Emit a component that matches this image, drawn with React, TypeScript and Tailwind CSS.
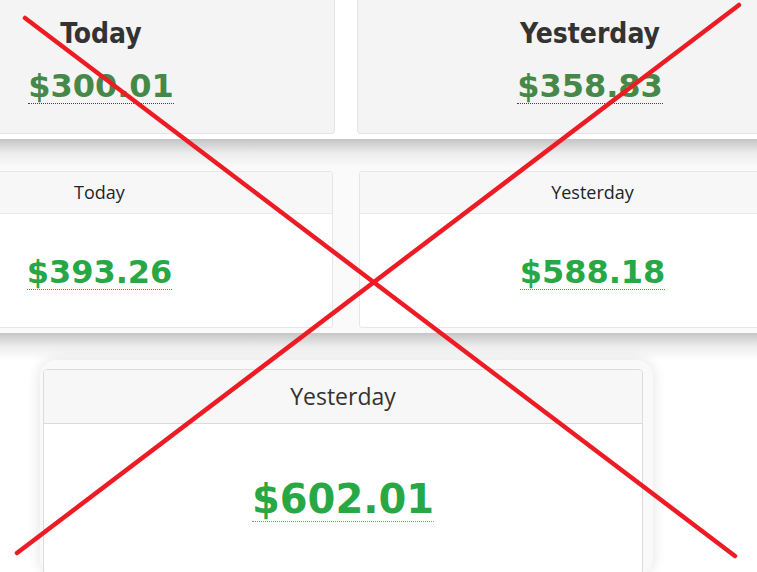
import React from "react";

const verdana = { fontFamily: '"DejaVu Sans", Verdana, sans-serif' };
const openSans = { fontFamily: '"Open Sans", "Noto Sans", sans-serif' };

function OldPanel({ label, amount, width }: { label: string; amount: string; width: string }) {
  return (
    <div className={`${width} h-[134px] shrink-0 bg-[#f4f4f4] border-x border-b border-[#e4e4e4] rounded-b-[4px] pt-[18px] text-center`}>
      <div className="text-[28px] leading-[32px] font-bold text-[#333]" style={{ fontFamily: '"DejaVu Sans Condensed", "DejaVu Sans", sans-serif' }}>
        {label}
      </div>
      <div className="mt-[19px]">
        <span className="inline-block text-[32px] leading-[34px] font-bold text-[#468847] border-b border-dotted border-[#444]" style={verdana}>
          {amount}
        </span>
      </div>
    </div>
  );
}

function CardPanel({ label, amount }: { label: string; amount: string }) {
  return (
    <div className="w-[467px] shrink-0 border border-[#e6e6e6] rounded-[3px] bg-white overflow-hidden">
      <div className="h-[42px] bg-[#f7f7f7] border-b border-[#ebebeb] flex items-center justify-center text-[18px] text-[#212529]" style={openSans}>
        {label}
      </div>
      <div className="h-[113px] pt-[41px] text-center">
        <span className="inline-block text-[32px] leading-[34px] font-bold text-[#28a745] border-b border-dotted border-[#28a745]" style={verdana}>
          {amount}
        </span>
      </div>
    </div>
  );
}

export default function App() {
  return (
    <div className="relative w-[757px] h-[572px] overflow-hidden bg-white">
      {/* first strip */}
      <div className="h-[139px] bg-white">
        <div className="flex gap-[22px] ml-[-133px]">
          <OldPanel label="Today" amount="$300.01" width="w-[468px]" />
          <OldPanel label="Yesterday" amount="$358.83" width="w-[466px]" />
        </div>
      </div>

      {/* second strip */}
      <div className="bg-[#fafafa]">
        <div className="h-[28px] bg-gradient-to-b from-[#c4c4c4] via-[#ececec] to-[#fafafa]" />
        <div className="flex gap-[26px] ml-[-134px] pt-[4px] pb-[5px]">
          <CardPanel label="Today" amount="$393.26" />
          <CardPanel label="Yesterday" amount="$588.18" />
        </div>
      </div>

      {/* third strip */}
      <div className="h-[27px] bg-gradient-to-b from-[#c6c6c6] via-[#ededed] to-white" />
      <div className="pl-[40px]">
        <div className="w-[613px] rounded-[16px] bg-[#f9f9f9] shadow-[0_0_14px_rgba(0,0,0,0.12)] pt-[9px] pl-[3px] pr-[10px]">
          <div className="border border-[#dcdcdc] rounded-[4px] bg-white overflow-hidden">
            <div className="h-[54px] bg-[#f7f7f7] border-b border-[#dadada] flex items-center justify-center text-[23px] text-[#333]" style={openSans}>
              Yesterday
            </div>
            <div className="h-[150px] pt-[53px] text-center">
              <span className="inline-block text-[40px] leading-[44px] font-bold text-[#28a745] border-b border-dotted border-[#5cb85c]" style={verdana}>
                $602.01
              </span>
            </div>
          </div>
        </div>
      </div>

      {/* red cross */}
      <svg className="absolute inset-0 pointer-events-none" width="757" height="572" viewBox="0 0 757 572">
        <line x1="25" y1="18" x2="735" y2="556" stroke="#ed1c24" strokeWidth="4.5" strokeLinecap="round" />
        <line x1="739" y1="5" x2="17" y2="553" stroke="#ed1c24" strokeWidth="4.5" strokeLinecap="round" />
      </svg>
    </div>
  );
}
